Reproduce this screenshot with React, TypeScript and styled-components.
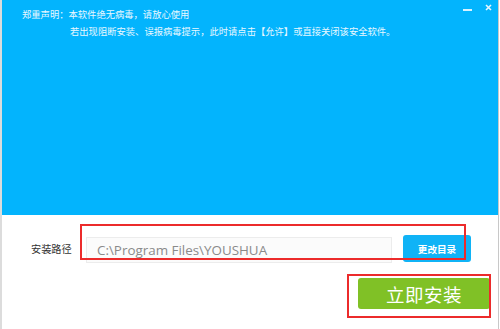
import React from 'react';
import styled, { createGlobalStyle } from 'styled-components';

const GlobalStyle = createGlobalStyle`
  html, body {
    margin: 0;
    padding: 0;
    background: #ffffff;
  }
  * {
    box-sizing: border-box;
  }
`;

const Window = styled.div`
  position: relative;
  width: 500px;
  height: 329px;
  display: flex;
  overflow: hidden;
  font-family: "Noto Sans CJK SC", "Noto Sans", sans-serif;
  background: #ffffff;
`;

const EdgeStrip = styled.div`
  width: 2px;
  flex-shrink: 0;
  background: #dcdcdc;
`;

const Main = styled.div`
  flex: 1;
  display: flex;
  flex-direction: column;
  border-right: 1px solid #c8c8c8;
  margin-right: 1px;
`;

const Header = styled.div`
  position: relative;
  height: 215px;
  background: #03b4fd;
  padding: 7px 0 0 20px;
  color: #eaf8ff;
  font-size: 9.3px;
  line-height: 14px;
`;

const NoticeLine = styled.div<{ indent?: number }>`
  padding-left: ${p => p.indent || 0}px;
  margin-bottom: ${p => (p.indent ? 0 : 3)}px;
  white-space: nowrap;
`;

const WinControls = styled.div`
  position: absolute;
  top: 3px;
  right: 6px;
  display: flex;
  align-items: center;
  gap: 13px;
`;

const Minimize = styled.div`
  width: 9px;
  height: 2px;
  margin-top: 6px;
  background: #d8f2ff;
`;

const Body = styled.div`
  flex: 1;
  display: flex;
  flex-direction: column;
  padding: 20px 26px 0 29px;
`;

const PathRow = styled.div`
  display: flex;
  align-items: center;
  height: 27px;
`;

const Label = styled.span`
  width: 41px;
  font-size: 10.2px;
  color: #333333;
  margin-right: 14px;
  white-space: nowrap;
`;

const PathInput = styled.div`
  width: 306px;
  height: 26px;
  margin-top: 2px;
  border: 1px solid #ececec;
  background: #fbfbfb;
  display: flex;
  align-items: center;
  padding-left: 10px;
  font-family: "Open Sans", "Noto Sans", sans-serif;
  font-size: 13.4px;
  color: #8a8a8a;
  white-space: nowrap;
`;

const ChangeButton = styled.div`
  width: 68px;
  height: 27px;
  margin-left: 11px;
  border-radius: 3px;
  background: #10b3f6;
  color: #ffffff;
  font-size: 9.6px;
  font-weight: 700;
  display: flex;
  align-items: center;
  justify-content: center;
`;

const InstallRow = styled.div`
  display: flex;
  justify-content: flex-end;
  margin-top: 16px;
  margin-right: -18px;
`;

const InstallButton = styled.div`
  width: 132px;
  height: 31px;
  border-radius: 3px;
  background: #80c126;
  color: #ffffff;
  font-size: 18.5px;
  display: flex;
  align-items: center;
  justify-content: center;
  letter-spacing: 0.5px;
`;

const Marker = styled.div<{ x: number; y: number; w: number; h: number }>`
  position: absolute;
  left: ${p => p.x}px;
  top: ${p => p.y}px;
  width: ${p => p.w}px;
  height: ${p => p.h}px;
  border: 2px solid #ec2b2b;
  pointer-events: none;
`;

const App: React.FC = () => {
  return (
    <>
      <GlobalStyle />
      <Window>
        <EdgeStrip />
        <Main>
          <Header>
            <NoticeLine>郑重声明：本软件绝无病毒，请放心使用</NoticeLine>
            <NoticeLine indent={48}>
              若出现阻断安装、误报病毒提示，此时请点击【允许】或直接关闭该安全软件。
            </NoticeLine>
            <WinControls>
              <Minimize />
              <svg width="7" height="7" viewBox="0 0 7 7">
                <path d="M1 1 L6 6 M6 1 L1 6" stroke="#e6f6ff" strokeWidth="1.6" />
              </svg>
            </WinControls>
          </Header>
          <Body>
            <PathRow>
              <Label>安装路径</Label>
              <PathInput>C:\Program Files\YOUSHUA</PathInput>
              <ChangeButton>更改目录</ChangeButton>
            </PathRow>
            <InstallRow>
              <InstallButton>立即安装</InstallButton>
            </InstallRow>
          </Body>
        </Main>
        <Marker x={80} y={224} w={386} h={36} />
        <Marker x={347} y={274} w={144} h={44} />
      </Window>
    </>
  );
};

export default App;
